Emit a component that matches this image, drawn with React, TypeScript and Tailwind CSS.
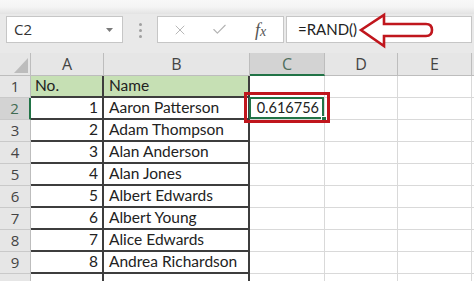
import { Check, X } from "lucide-react";

const names = [
  "Aaron Patterson",
  "Adam Thompson",
  "Alan Anderson",
  "Alan Jones",
  "Albert Edwards",
  "Albert Young",
  "Alice Edwards",
  "Andrea Richardson",
];

const cellFont = { fontFamily: "Lato, 'Liberation Sans', sans-serif" };
const uiFont = { fontFamily: "'Open Sans', 'Noto Sans', sans-serif" };

const RowHeader = ({ n, active }: { n?: number; active?: boolean }) => (
  <div
    style={uiFont}
    className={`flex h-full w-[31px] shrink-0 items-center justify-center border-b border-[#c9c9c9] text-[15px] ${
      active
        ? "border-r-2 border-r-[#217346] bg-[#d3d3d3] text-[#3f6b52]"
        : "border-r border-r-[#bdbdbd] bg-[#e6e6e6] text-[#444]"
    }`}
  >
    {n}
  </div>
);

const EmptyCells = () => (
  <>
    <div className="h-full w-[75px] shrink-0 border-r border-b border-[#d9d9d9] bg-white" />
    <div className="h-full w-[73px] shrink-0 border-r border-b border-[#d9d9d9] bg-white" />
    <div className="h-full w-[74px] shrink-0 border-r border-b border-[#d9d9d9] bg-white" />
    <div className="h-full flex-1 border-b border-[#d9d9d9] bg-white" />
  </>
);

export default function App() {
  return (
    <div className="relative flex h-[281px] w-[474px] flex-col overflow-hidden bg-[#e9e9e9] text-[#222]">
      {/* ribbon edge */}
      <div className="h-[14px] shrink-0 bg-linear-to-b from-[#f8f8f8] via-[#f4f4f4] to-[#e3e3e3]" />

      {/* formula bar */}
      <div className="flex h-[39px] shrink-0 items-start pt-[2px]">
        <div
          style={uiFont}
          className="ml-[6px] flex h-[27px] w-[117px] items-center justify-between border border-[#c6c6c6] bg-white pl-[7px] pr-[9px] text-[15px] text-[#333]"
        >
          <span>C2</span>
          <svg width="7" height="4" viewBox="0 0 7 4">
            <polygon points="0,0 7,0 3.5,4" fill="#7a7a7a" />
          </svg>
        </div>
        <div className="flex w-[34px] flex-col items-center gap-[3px] pt-[7px]">
          <span className="h-[3px] w-[3px] rounded-full bg-[#a0a0a0]" />
          <span className="h-[3px] w-[3px] rounded-full bg-[#a0a0a0]" />
          <span className="h-[3px] w-[3px] rounded-full bg-[#a0a0a0]" />
        </div>
        <div className="flex h-[27px] w-[127px] items-center border border-[#c6c6c6] bg-white">
          <div className="flex w-[41px] justify-center pl-[2px]">
            <X size={16} strokeWidth={1.4} color="#b3b3b3" />
          </div>
          <div className="flex w-[41px] justify-center">
            <Check size={17} strokeWidth={1.6} color="#b3b3b3" />
          </div>
          <div className="flex w-[41px] justify-center">
            <span
              style={{ fontFamily: "'Liberation Serif', serif" }}
              className="text-[18px] italic leading-none text-[#555]"
            >
              f<span className="text-[14px]">x</span>
            </span>
          </div>
        </div>
        <div
          style={cellFont}
          className="ml-[2px] flex h-[27px] w-[186px] items-center border border-[#c6c6c6] bg-white pl-[11px] text-[15px] text-[#222]"
        >
          =RAND()
        </div>
      </div>

      {/* column headers */}
      <div style={uiFont} className="flex h-[23px] shrink-0 text-[16px] text-[#444]">
        <div className="relative h-full w-[31px] shrink-0 border-r border-b border-[#bdbdbd] bg-[#e6e6e6]">
          <svg className="absolute left-[14px] top-[5px]" width="14" height="15" viewBox="0 0 14 15">
            <polygon points="14,0 14,15 0,15" fill="#bcbcbc" />
          </svg>
        </div>
        <div className="flex h-full w-[73px] shrink-0 items-center justify-center border-r border-b border-[#bdbdbd] bg-[#e6e6e6]">
          A
        </div>
        <div className="flex h-full w-[146px] shrink-0 items-center justify-center border-r border-b border-[#bdbdbd] bg-[#e6e6e6]">
          B
        </div>
        <div className="flex h-full w-[75px] shrink-0 items-center justify-center border-r border-r-[#bdbdbd] border-b-2 border-b-[#217346] bg-[#d3d3d3] text-[#4f6e5d]">
          C
        </div>
        <div className="flex h-full w-[73px] shrink-0 items-center justify-center border-r border-b border-[#bdbdbd] bg-[#e6e6e6]">
          D
        </div>
        <div className="flex h-full w-[74px] shrink-0 items-center justify-center border-r border-b border-[#bdbdbd] bg-[#e6e6e6]">
          E
        </div>
        <div className="h-full flex-1 border-b border-[#bdbdbd] bg-[#e6e6e6]" />
      </div>

      {/* row 1 */}
      <div style={cellFont} className="flex h-[22px] shrink-0 text-[15.5px]">
        <RowHeader n={1} />
        <div className="flex h-full w-[73px] shrink-0 items-center border-r-2 border-b-2 border-[#3d3d3d] bg-[#c6e0b4] pl-[4px]">
          No.
        </div>
        <div className="flex h-full w-[146px] shrink-0 items-center border-r-2 border-b-2 border-[#3d3d3d] bg-[#c6e0b4] pl-[5px]">
          Name
        </div>
        <EmptyCells />
      </div>

      {/* data rows */}
      {names.map((name, i) => (
        <div key={name} style={cellFont} className="flex h-[22px] shrink-0 text-[15.5px]">
          <RowHeader n={i + 2} active={i === 0} />
          <div className="flex h-full w-[73px] shrink-0 items-center justify-end border-r-2 border-b-2 border-[#3d3d3d] bg-white pr-[4px]">
            {i + 1}
          </div>
          <div className="flex h-full w-[146px] shrink-0 items-center border-r-2 border-b-2 border-[#3d3d3d] bg-white pl-[5px]">
            {name}
          </div>
          {i === 0 ? (
            <>
              <div className="relative h-full w-[75px] shrink-0 border-r border-b border-[#d9d9d9] bg-white">
                <div className="absolute -left-[1px] -top-[1px] bottom-0 right-0 flex items-center justify-end border-2 border-[#217346] pr-[3px] text-[14.5px]">
                  0.616756
                </div>
                <div className="absolute -bottom-[3px] -right-[3px] h-[6px] w-[6px] border border-white bg-[#217346]" />
                <div className="absolute -left-[6px] -right-[6px] -top-[6px] -bottom-[4px] border-[3px] border-[#c0161d]" />
              </div>
              <div className="h-full w-[73px] shrink-0 border-r border-b border-[#d9d9d9] bg-white" />
              <div className="h-full w-[74px] shrink-0 border-r border-b border-[#d9d9d9] bg-white" />
              <div className="h-full flex-1 border-b border-[#d9d9d9] bg-white" />
            </>
          ) : (
            <EmptyCells />
          )}
        </div>
      ))}

      {/* row 10 (only its top edge shows) */}
      <div className="flex h-[22px] shrink-0">
        <RowHeader />
        <div className="h-full w-[73px] shrink-0 border-r-2 border-[#3d3d3d] bg-white" />
        <div className="h-full w-[146px] shrink-0 border-r-2 border-[#3d3d3d] bg-white" />
        <EmptyCells />
      </div>

      {/* red callout arrow */}
      <svg className="absolute left-[356px] top-[10px]" width="82" height="42" viewBox="0 0 82 42">
        <path
          d="M5 20 L28 5 L28 14 L70 14 Q76 14 76 20 Q76 26 70 26 L28 26 L28 36 Z"
          fill="white"
          stroke="#c0161d"
          strokeWidth="2.6"
          strokeLinejoin="miter"
        />
      </svg>
    </div>
  );
}
